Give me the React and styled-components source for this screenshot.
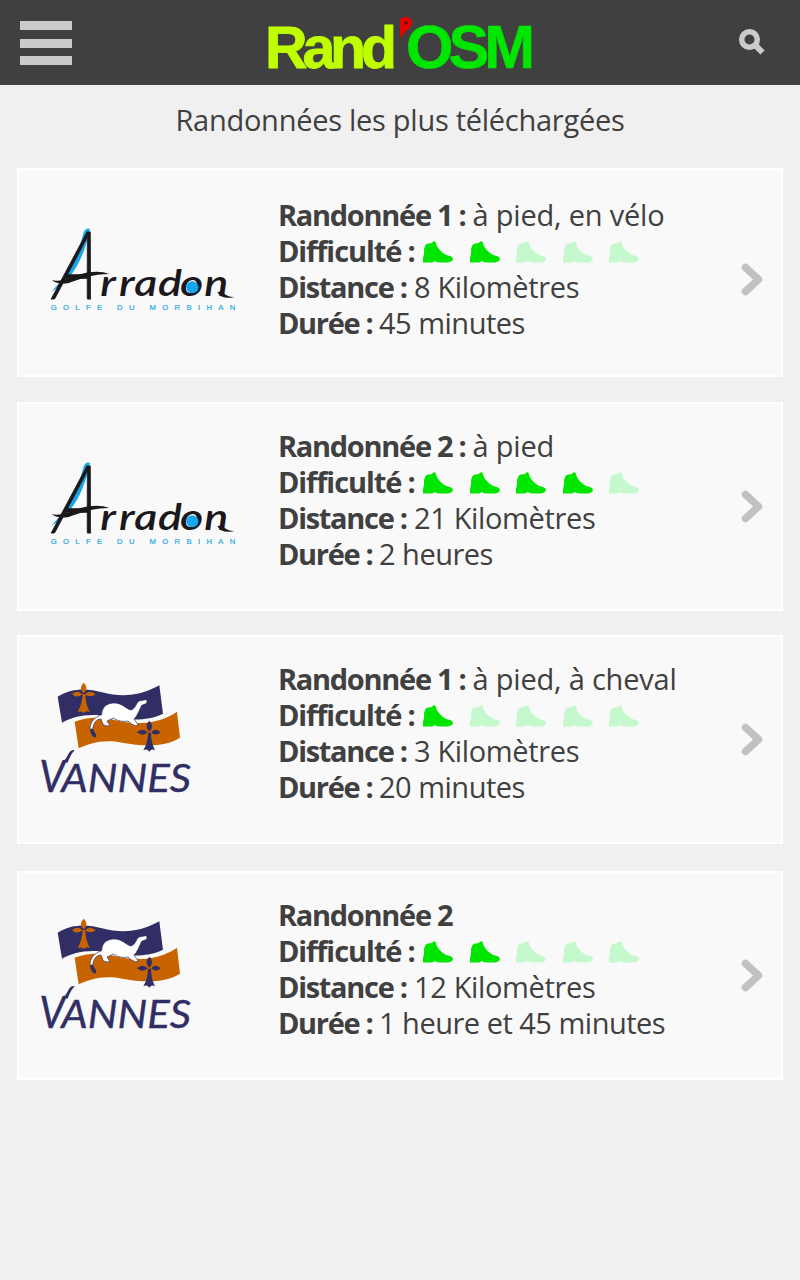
import React from "react";
import styled, { createGlobalStyle } from "styled-components";

const GlobalStyle = createGlobalStyle`
  *, *::before, *::after { box-sizing: border-box; }
  body { margin: 0; background: #f0f0f0; }
`;

const Page = styled.div`
  min-height: 1280px;
  background: #f0f0f0;
  color: #404040;
  font-family: "Open Sans", "Noto Sans", sans-serif;
  font-size: 29px;
`;

const Header = styled.header`
  height: 85px;
  display: grid;
  grid-template-columns: 80px 1fr 80px;
  background: #404040;
`;

const MenuButton = styled.button`
  border: 0;
  padding: 21px 0 0 20px;
  background: none;
  display: flex;
  flex-direction: column;
  gap: 8.5px;
`;

const MenuBar = styled.span`
  width: 52px;
  height: 9px;
  background: #cbcbcb;
`;

const Brand = styled.svg`
  display: block;
  width: 280px;
  height: 75px;
  margin: 5px 0 0 180px;
`;

const SearchButton = styled.button`
  border: 0;
  padding: 28px 0 0 18px;
  background: none;
  display: flex;
  align-items: flex-start;
`;

const Title = styled.h1`
  margin: 0;
  height: 83px;
  padding-top: 17px;
  text-align: center;
  font-size: 29px;
  line-height: 36px;
  font-weight: 400;
  white-space: nowrap;
  letter-spacing: -0.27px;
`;

const List = styled.main`
  padding: 0 17px;
`;

const Card = styled.article`
  height: 209px;
  margin-bottom: ${(p) => p.$gap}px;
  border: 2px solid #fff;
  background: #f9f9f9;
  display: grid;
  grid-template-columns: 259px 1fr 42px;
`;

const LogoCell = styled.div`
  padding: ${(p) => (p.$town === "arradon" ? "50px 0 0 21px" : "38px 0 0 11px")};
  svg { display: block; overflow: visible; }
`;

const Details = styled.div`
  padding-top: ${(p) => p.$top}px;
`;

const Line = styled.div`
  height: 36px;
  line-height: 36px;
  display: flex;
  align-items: center;
  white-space: nowrap;
`;

const Label = styled.strong`
  font-weight: 700;
  letter-spacing: ${(p) => p.$spacing}px;
  width: ${(p) => p.$width}px;
  flex: none;
`;

const Value = styled.span`
  letter-spacing: ${(p) => p.$spacing}px;
`;

const Rating = styled.span`
  display: flex;
  gap: 16.5px;
  padding-top: 1px;
`;

const BootIcon = styled.svg`
  width: 30px;
  height: 22px;
  fill: ${(p) => (p.$on ? "#00e600" : "#c6f8cd")};
`;

const Arrow = styled.svg`
  width: 24px;
  height: 36px;
  margin-top: ${(p) => p.$top}px;
`;

function BrandLogo() {
  return (
    <Brand viewBox="0 0 280 75" role="img" aria-label="Rand'OSM">
      <text x="5" y="62.500" textLength="132" lengthAdjust="spacing" fontFamily="Liberation Sans, sans-serif" fontWeight="700" fontSize="59" fill="#bfff00" stroke="#bfff00" strokeWidth="0.8" strokeLinejoin="round">Rand</text>
      <text x="146" y="62.500" textLength="129" lengthAdjust="spacing" fontFamily="Liberation Sans, sans-serif" fontWeight="700" fontSize="61" fill="#00e600" stroke="#00e600" strokeWidth="0.6">OSM</text>
      <path d="M140 34V18.500C139 14 142 12 145.500 12C150 12 152.500 15 152 18.500C151 24 144 26 140 34Z" fill="#e60000" />
      <circle cx="145.800" cy="18" r="1.800" fill="#611010" />
    </Brand>
  );
}

function Boot({ on }) {
  return (
    <BootIcon $on={on} viewBox="0 0 30 22">
      <path d="M1 8L2.500 4Q3.500 2.200 7.500 2.300Q9 2.300 10 .8Q11.800-.4 12.800 1.500C13.300 5 16 9 20 12Q23 14.300 27 15Q30 16 30 18.200Q29.500 20.500 25 21.500H18Q14 21.500 11.500 20Q10.500 21.500 8 21.500H0V17Q1.500 12 1 8Z" />
    </BootIcon>
  );
}

function ArradonLogo() {
  return (
    <svg width="205" height="100" viewBox="0 0 615 300" role="img" aria-label="Arradon Golfe du Morbihan">
      <path d="M150 27Q138 21 131 37C113 112 78 171 34 215C91 185 130 124 150 27Z" fill="#16a6e5" />
      <text transform="translate(38 237) skewX(-10)" textLength="124" lengthAdjust="spacingAndGlyphs" fontFamily="Lato, sans-serif" fontStyle="italic" fontWeight="300" fontSize="284" fill="#1b181b" stroke="#1b181b" strokeWidth="3" strokeLinejoin="round">A</text>
      <path d="M35 181C72 188 104 164 145 157Q182 151 208 162C160 162 118 177 86 189Q56 195 35 181Z" fill="#1b181b" />
      <text transform="scale(1.22 1)" x="148 194 232 290 344 404" y="229" fontFamily="Lato, sans-serif" fontStyle="italic" fontWeight="600" fontSize="110" fill="#1b181b">rradon</text>
      <path d="M532 217Q546 240 583 231Q558 231 546 213Z" fill="#1b181b" />
      <circle cx="457" cy="202" r="18" fill="#16a6f0" />
      <text x="32" y="270" textLength="554" fontFamily="Liberation Sans, sans-serif" fontSize="23" fill="#29a9df" stroke="#29a9df" strokeWidth="0.6">GOLFE DU MORBIHAN</text>
    </svg>
  );
}

function VannesLogo() {
  return (
    <svg width="170" height="125" viewBox="0 0 510 375" role="img" aria-label="Vannes">
      <path d="M83 65C131 37 174 41 216 52C278 68 334 62 388 31L399 116C350 141 288 134 240 126C178 113 132 124 96 143Z" fill="#302e65" />
      <path d="M134 140C180 121 226 128 263 137C329 151 391 145 441 110L450 188C399 219 334 213 277 203C221 191 178 205 146 220Z" fill="#c86400" />
      <g fill="#c86400">
        <path d="M161 23Q178 37 161 55Q144 38 161 23Z" />
        <path d="M126 57Q145 43 157 58Q140 72 126 57ZM165 58Q180 43 197 58Q181 70 165 58Z" />
        <path d="M158 57H166Q166 88 180 111Q169 106 161 114Q152 107 143 111Q158 83 158 57Z" />
      </g>
      <g fill="#302e65">
        <path d="M358 137Q375 153 358 170Q341 154 358 137Z" />
        <path d="M320 172Q339 157 353 172Q339 186 320 172ZM363 172Q377 157 392 172Q378 185 363 172Z" />
        <path d="M354 173H363Q363 202 375 226Q365 220 358 230Q351 220 340 226Q354 202 354 173Z" />
      </g>
      <path d="M180 162C180 141 193 127 215 119C216 99 226 86 250 84C277 83 286 101 302 105C318 102 318 82 328 78L347 74Q355 78 348 86L335 91C327 107 322 124 312 132L325 151Q316 155 306 148L294 138Q271 143 250 129L231 138L240 152Q226 155 219 148L213 132C198 132 190 145 188 163Z" fill="#fff" stroke="#302e65" strokeWidth="2" />
      <path d="M180 163L188 161L199 180Q200 186 193 188Q181 180 180 163Z" fill="#302e65" />
      <path d="M101 261Q110 247 117 234Q123 223 134 226Q121 239 113 263Z" fill="#302e65" />
      <text y="350" fontFamily="Lato, sans-serif" fontStyle="italic" fontWeight="400" fill="#302e65" stroke="#302e65" strokeWidth="1.2">
        <tspan x="28" fontSize="134" textLength="77" lengthAdjust="spacingAndGlyphs">V</tspan>
        <tspan x="94" fontSize="116" textLength="389" lengthAdjust="spacingAndGlyphs">ANNES</tspan>
      </text>
    </svg>
  );
}

const hikes = [
  { town: "arradon", gap: 25, top: 27, arrow: 91, name: "Randonnée 1 :", modes: "à pied, en vélo", level: 2, distance: "8 Kilomètres", duration: "45 minutes" },
  { town: "arradon", gap: 24, top: 24, arrow: 84, name: "Randonnée 2 :", modes: "à pied", level: 4, distance: "21 Kilomètres", duration: "2 heures" },
  { town: "vannes", gap: 27, top: 24, arrow: 84, name: "Randonnée 1 :", modes: "à pied, à cheval", level: 1, distance: "3 Kilomètres", duration: "20 minutes" },
  { town: "vannes", gap: 0, top: 24, arrow: 84, name: "Randonnée 2", modes: "", level: 2, distance: "12 Kilomètres", duration: "1 heure et 45 minutes" },
];

function HikeCard({ hike }) {
  return (
    <Card $gap={hike.gap}>
      <LogoCell $town={hike.town}>{hike.town === "arradon" ? <ArradonLogo /> : <VannesLogo />}</LogoCell>
      <Details $top={hike.top}>
        <Line><Label $width={194.5} $spacing={-1.3}>{hike.name}</Label><Value $spacing={-0.2}>{hike.modes}</Value></Line>
        <Line>
          <Label $width={145} $spacing={-1.1}>Difficulté :</Label>
          <Rating>{[1, 2, 3, 4, 5].map((n) => <Boot key={n} on={n <= hike.level} />)}</Rating>
        </Line>
        <Line><Label $width={136} $spacing={-1.3}>Distance :</Label><Value $spacing={-0.35}>{hike.distance}</Value></Line>
        <Line><Label $width={101} $spacing={-1.35}>Durée :</Label><Value $spacing={-0.5}>{hike.duration}</Value></Line>
      </Details>
      <Arrow $top={hike.arrow} viewBox="0 0 24 36">
        <path d="M6.500 6.500L19.500 18.500L6.500 30.500" fill="none" stroke="#c1c1c1" strokeWidth="7.500" strokeLinecap="round" strokeLinejoin="round" />
      </Arrow>
    </Card>
  );
}

export default function App() {
  return (
    <Page>
      <GlobalStyle />
      <Header>
        <MenuButton aria-label="Menu"><MenuBar /><MenuBar /><MenuBar /></MenuButton>
        <BrandLogo />
        <SearchButton aria-label="Rechercher">
          <svg width="28" height="28" viewBox="0 0 28 28" fill="none" stroke="#cbcbcb">
            <circle cx="11.500" cy="11.500" r="7.800" strokeWidth="5.500" />
            <path d="M17 17L24.500 24.500" strokeWidth="6" />
          </svg>
        </SearchButton>
      </Header>
      <Title>Randonnées les plus téléchargées</Title>
      <List>{hikes.map((hike, i) => <HikeCard key={i} hike={hike} />)}</List>
    </Page>
  );
}
